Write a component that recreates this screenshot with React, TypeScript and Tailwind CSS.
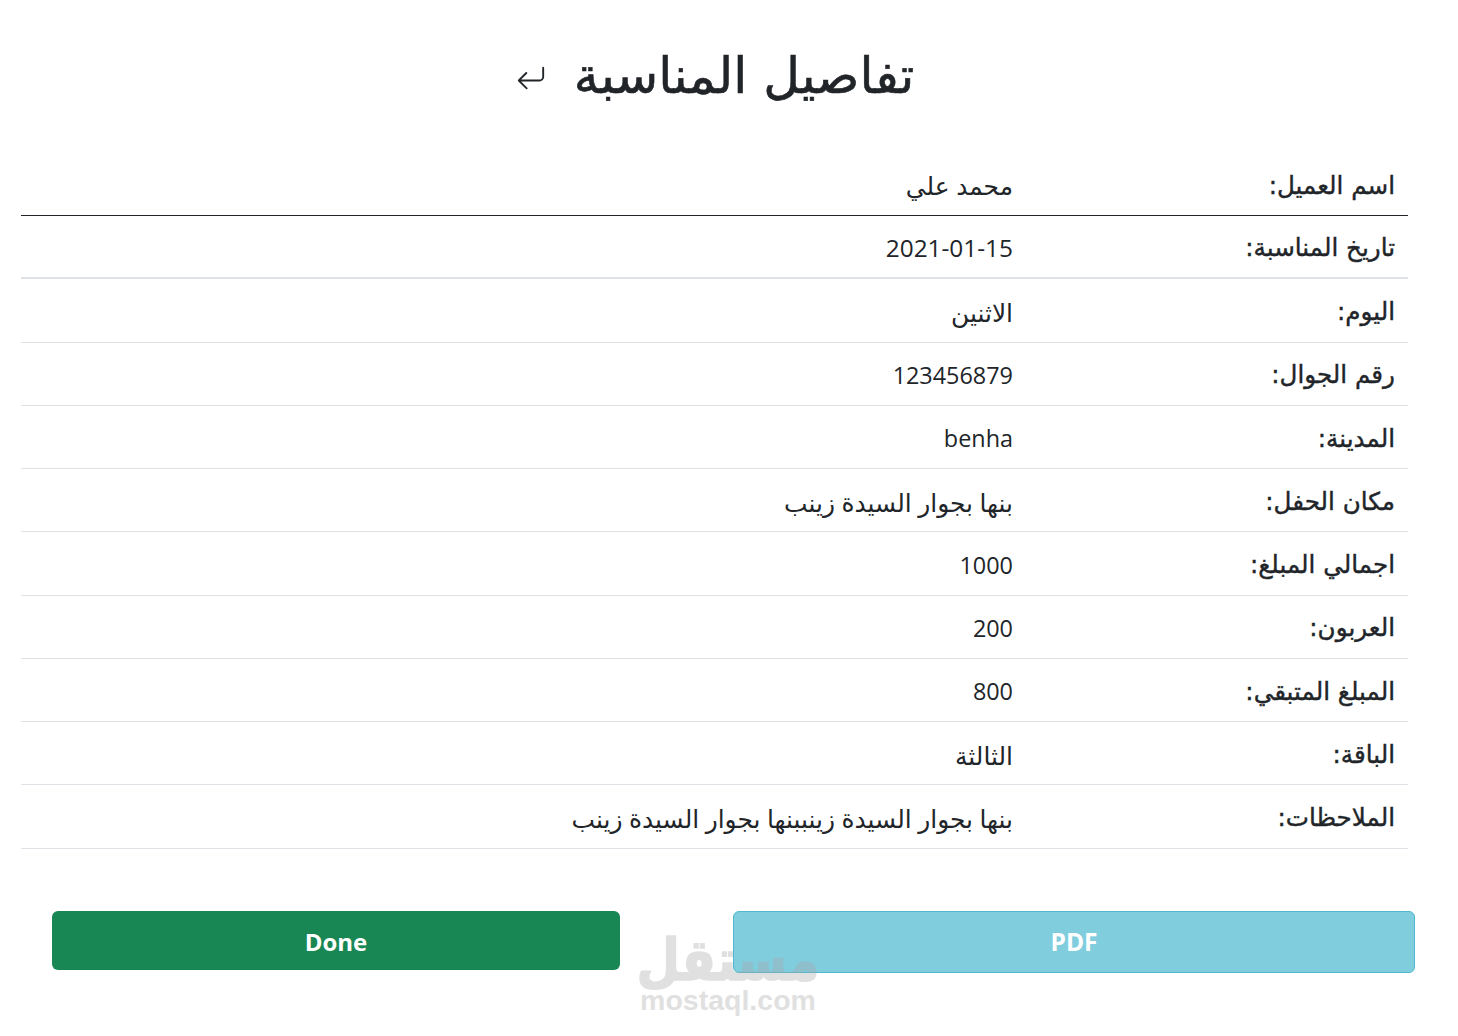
const rows: [string, string, string, string][] = [
  ["اسم العميل:", "محمد علي", "border-[#212529]", "text-[24.9px]"],
  ["تاريخ المناسبة:", "2021-01-15", "border-[#dee2e6] border-b-2", "text-[24.4px]"],
  ["اليوم:", "الاثنين", "border-[#dee2e6]", "text-[24.9px]"],
  ["رقم الجوال:", "123456879", "border-[#dee2e6]", "text-[23.4px]"],
  ["المدينة:", "benha", "border-[#dee2e6]", "text-[23.4px]"],
  ["مكان الحفل:", "بنها بجوار السيدة زينب", "border-[#dee2e6]", "text-[24.9px]"],
  ["اجمالي المبلغ:", "1000", "border-[#dee2e6]", "text-[23.4px]"],
  ["العربون:", "200", "border-[#dee2e6]", "text-[23.4px]"],
  ["المبلغ المتبقي:", "800", "border-[#dee2e6]", "text-[23.4px]"],
  ["الباقة:", "الثالثة", "border-[#dee2e6]", "text-[24.9px]"],
  ["الملاحظات:", "بنها بجوار السيدة زينببنها بجوار السيدة زينب", "border-[#dee2e6]", "text-[24.9px]"],
];

export default function App() {
  return (
    <div dir="rtl" className="relative h-[1036px] w-[1458px] overflow-hidden bg-white text-[#212529] font-['Open_Sans','DejaVu_Sans',sans-serif]">
      <div className="flex h-[152.9px] items-start justify-center pt-[42px] pr-[28px]">
        <h1 className="text-[50.4px] leading-[68px] font-normal font-['DejaVu_Sans',sans-serif] [-webkit-text-stroke:0.6px_#212529]">تفاصيل المناسبة</h1>
        <svg className="mt-[22px] mr-[28px]" width="30" height="30" viewBox="0 0 16 16" fill="#212529">
          <path fillRule="evenodd" d="M14.5 1.5a.5.5 0 0 1 .5.5v4.8a2.5 2.5 0 0 1-2.5 2.5H2.707l3.347 3.346a.5.5 0 0 1-.708.708l-4.2-4.2a.5.5 0 0 1 0-.708l4-4a.5.5 0 1 1 .708.708L2.707 8.3H12.5A1.5 1.5 0 0 0 14 6.8V2a.5.5 0 0 1 .5-.5z" />
        </svg>
      </div>
      <div className="ml-[21px] mr-[50px]">
        {rows.map(([label, value, border, size]) => (
          <div key={label} className={`flex h-[63.25px] items-center border-b pt-[4px] ${border}`}>
            <div className="w-[383px] shrink-0 pr-[13px] text-[24.6px] font-['DejaVu_Sans',sans-serif] [-webkit-text-stroke:0.4px_#212529]">{label}</div>
            <div className={`pr-[12px] ${size}`}>{value}</div>
          </div>
        ))}
      </div>
      <div dir="ltr" className="flex items-start pt-[62px] pl-[52px]">
        <button className="h-[59px] w-[568px] rounded-md bg-[#198754] pt-[3px] text-[24px] font-bold text-white">Done</button>
        <button className="ml-[113px] h-[62px] w-[682px] rounded-md border border-[#4fb8cf] bg-[#80cdde] pt-[1px] text-[24.5px] font-bold text-white">PDF</button>
      </div>
      <div dir="ltr" className="pointer-events-none absolute left-[628px] top-[933px] flex w-[200px] flex-col items-center text-[#a8a8a8] opacity-35">
        <span className="mb-[7px] origin-top scale-y-[1.15] text-[50px] leading-[48px] font-bold font-['DejaVu_Sans',sans-serif] [-webkit-text-stroke:1.5px_#a8a8a8]">مستقل</span>
        <span className="font-['Liberation_Sans',sans-serif] text-[28.5px] leading-[24px] font-bold">mostaql.com</span>
      </div>
    </div>
  );
}
